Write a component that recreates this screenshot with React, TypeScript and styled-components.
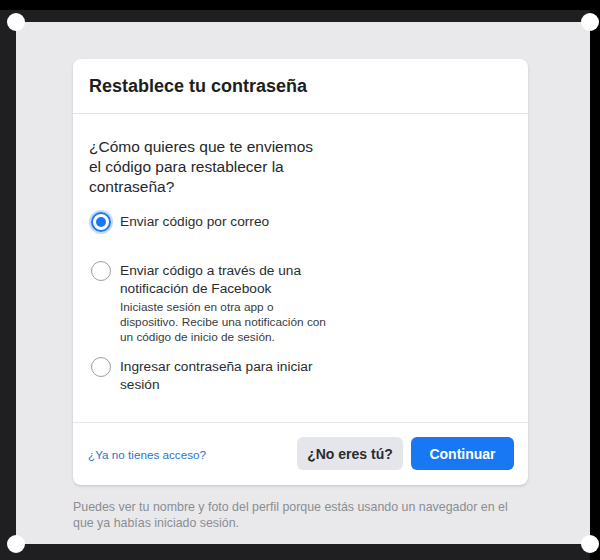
import React from "react";
import styled, { createGlobalStyle } from "styled-components";

const Global = createGlobalStyle`
  html, body { margin: 0; padding: 0; background: #000; }
  body { font-family: "Liberation Sans", Arial, Helvetica, sans-serif; }
  * { box-sizing: border-box; }
`;

const Screen = styled.div`
  width: 600px;
  height: 560px;
  background: #000;
  display: flex;
  flex-direction: column;
  overflow: hidden;
`;

const TopBand = styled.div`
  height: 10px;
  flex: none;
`;

const Stage = styled.div`
  width: 590px;
  flex: 1;
  background: #1f1f21;
  padding: 12px 0 16px 16px;
`;

const Panel = styled.div`
  position: relative;
  width: 574px;
  height: 522px;
  background: #e9e9ec;
  padding: 37px 0 0 57px;
`;

const Handle = styled.span<{ $x: "left" | "right"; $y: "top" | "bottom" }>`
  position: absolute;
  width: 18px;
  height: 18px;
  border-radius: 50%;
  background: #fff;
  ${(p) => (p.$x === "left" ? "left: -9px;" : "right: -9px;")}
  ${(p) => (p.$y === "top" ? "top: -9px;" : "bottom: -9px;")}
`;

const Card = styled.div`
  width: 455px;
  background: #fff;
  border-radius: 8px;
  box-shadow: 0 1px 2px rgba(0, 0, 0, 0.1), 0 2px 4px rgba(0, 0, 0, 0.06);
`;

const Header = styled.div`
  height: 55px;
  padding: 0 16px;
  display: flex;
  align-items: center;
  border-bottom: 1px solid #e2e3e6;
`;

const Title = styled.h2`
  margin: 0;
  font-size: 18px;
  font-weight: 700;
  color: #1c1e21;
  padding-top: 1px;
`;

const Body = styled.div`
  padding: 23px 16px 28px 16px;
`;

const Question = styled.p`
  margin: 0;
  width: 240px;
  font-size: 15.5px;
  line-height: 20px;
  color: #26282c;
`;

const Options = styled.div`
  margin-top: 16px;
  display: flex;
  flex-direction: column;
`;

const Option = styled.label<{ $after: number }>`
  display: flex;
  align-items: flex-start;
  gap: 9px;
  padding-left: 2px;
  margin-bottom: ${(p) => p.$after}px;
  cursor: pointer;
`;

const Radio = styled.span<{ $checked?: boolean }>`
  flex: none;
  width: 20px;
  height: 20px;
  margin-top: -1px;
  border-radius: 50%;
  display: flex;
  align-items: center;
  justify-content: center;
  border: ${(p) => (p.$checked ? "2px solid #1877f2" : "1.5px solid #9a9ea4")};
  box-shadow: ${(p) => (p.$checked ? "0 0 0 2px #c3daf8" : "none")};
  &::after {
    content: "";
    display: ${(p) => (p.$checked ? "block" : "none")};
    width: 10px;
    height: 10px;
    border-radius: 50%;
    background: #1877f2;
  }
`;

const OptionText = styled.div`
  display: flex;
  flex-direction: column;
`;

const OptionLabel = styled.span`
  font-size: 13.7px;
  line-height: 18px;
  color: #2b2d31;
  width: 200px;
`;

const OptionSub = styled.span`
  margin-top: 2px;
  font-size: 11.8px;
  line-height: 15px;
  color: #3a3c40;
  width: 215px;
`;

const Footer = styled.div`
  height: 63px;
  border-top: 1px solid #e6e7ea;
  display: flex;
  align-items: center;
  padding: 0 14px 1px 15px;
  gap: 8px;
`;

const Link = styled.a`
  font-size: 11.7px;
  color: #2d72d2;
  text-decoration: none;
  margin-right: auto;
  padding-top: 2px;
`;

const Button = styled.button<{ $primary?: boolean }>`
  height: 33px;
  border: none;
  border-radius: 6px;
  font-family: inherit;
  font-size: 14px;
  font-weight: 700;
  padding: 0;
  width: ${(p) => (p.$primary ? "103px" : "106px")};
  background: ${(p) => (p.$primary ? "#1877f2" : "#e4e6eb")};
  color: ${(p) => (p.$primary ? "#fff" : "#2a2c30")};
`;

const Note = styled.p`
  margin: 14px 0 0 0;
  width: 445px;
  font-size: 12.4px;
  line-height: 16px;
  color: #8b8d92;
`;

export default function App() {
  return (
    <>
      <Global />
      <Screen>
        <TopBand />
        <Stage>
          <Panel>
            <Handle $x="left" $y="top" />
            <Handle $x="right" $y="top" />
            <Handle $x="left" $y="bottom" />
            <Handle $x="right" $y="bottom" />
            <Card>
              <Header>
                <Title>Restablece tu contraseña</Title>
              </Header>
              <Body>
                <Question>
                  ¿Cómo quieres que te enviemos el código para restablecer la contraseña?
                </Question>
                <Options>
                  <Option $after={30}>
                    <Radio $checked />
                    <OptionText>
                      <OptionLabel>Enviar código por correo</OptionLabel>
                    </OptionText>
                  </Option>
                  <Option $after={13}>
                    <Radio />
                    <OptionText>
                      <OptionLabel>Enviar código a través de una notificación de Facebook</OptionLabel>
                      <OptionSub>
                        Iniciaste sesión en otra app o dispositivo. Recibe una notificación con un
                        código de inicio de sesión.
                      </OptionSub>
                    </OptionText>
                  </Option>
                  <Option $after={0}>
                    <Radio />
                    <OptionText>
                      <OptionLabel>Ingresar contraseña para iniciar sesión</OptionLabel>
                    </OptionText>
                  </Option>
                </Options>
              </Body>
              <Footer>
                <Link href="#">¿Ya no tienes acceso?</Link>
                <Button>¿No eres tú?</Button>
                <Button $primary>Continuar</Button>
              </Footer>
            </Card>
            <Note>
              Puedes ver tu nombre y foto del perfil porque estás usando un navegador en el que ya
              habías iniciado sesión.
            </Note>
          </Panel>
        </Stage>
      </Screen>
    </>
  );
}
